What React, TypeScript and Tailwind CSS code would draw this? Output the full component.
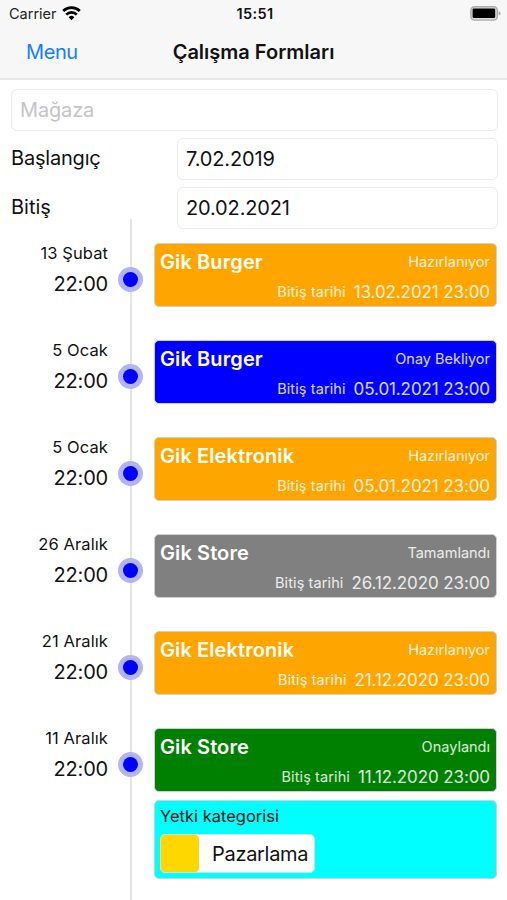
import React, { useState } from 'react';

interface WorkForm {
  id: string;
  store: string;
  day: string;
  time: string;
  status: string;
  endDate: string;
  category?: string;
}

const forms: WorkForm[] = [
  { id: '1', store: 'Gik Burger', day: '13 Şubat', time: '22:00', status: 'Hazırlanıyor', endDate: '13.02.2021 23:00' },
  { id: '2', store: 'Gik Burger', day: '5 Ocak', time: '22:00', status: 'Onay Bekliyor', endDate: '05.01.2021 23:00' },
  { id: '3', store: 'Gik Elektronik', day: '5 Ocak', time: '22:00', status: 'Hazırlanıyor', endDate: '05.01.2021 23:00' },
  { id: '4', store: 'Gik Store', day: '26 Aralık', time: '22:00', status: 'Tamamlandı', endDate: '26.12.2020 23:00' },
  { id: '5', store: 'Gik Elektronik', day: '21 Aralık', time: '22:00', status: 'Hazırlanıyor', endDate: '21.12.2020 23:00' },
  { id: '6', store: 'Gik Store', day: '11 Aralık', time: '22:00', status: 'Onaylandı', endDate: '11.12.2020 23:00', category: 'Pazarlama' },
];

const statusColors: Record<string, string> = {
  'Hazırlanıyor': 'bg-[#ffa500]',
  'Onay Bekliyor': 'bg-[#0000ff]',
  'Tamamlandı': 'bg-[#808080]',
  'Onaylandı': 'bg-[#008000]',
};

const inputClass =
  'h-[42px] min-w-0 rounded-md border border-[#ebebeb] bg-white px-[8px] text-[20px] tracking-[-0.15px] outline-none placeholder:text-[#c4c4c6]';

function StatusBar() {
  return (
    <div className="flex h-[27px] items-center justify-between px-[8px]">
      <div className="flex flex-1 items-center gap-[5px] pl-[1px]">
        <span className="text-[14.5px] text-[#222]">Carrier</span>
        <svg width="19" height="15" viewBox="0 0 19 15" fill="none" stroke="#000" strokeWidth="2.7">
          <path d="M1.2 5a12 12 0 0 1 16.6 0" />
          <path d="M4.2 8.6a7.6 7.6 0 0 1 10.6 0" />
          <path d="M9.5 14.2 6.6 11.2a4.2 4.2 0 0 1 5.8 0z" fill="#000" stroke="none" />
        </svg>
      </div>
      <span className="text-[14.5px] font-semibold tracking-[0.4px]">15:51</span>
      <div className="-mr-[2px] flex flex-1 justify-end">
        <svg width="31" height="15" viewBox="0 0 31 15">
          <rect x="0.9" y="0.7" width="26.4" height="13.4" rx="3.6" fill="#dcdcdc" stroke="#ababab" strokeWidth="1.4" />
          <rect x="2.6" y="2.6" width="22.6" height="9.4" rx="1.2" fill="#000" />
          <path d="M28.6 5.2q2 .6 2 2.2t-2 2.2z" fill="#a9a9a9" />
        </svg>
      </div>
    </div>
  );
}

function FormCard({ form }: { form: WorkForm }) {
  return (
    <div
      className={`flex h-[64px] flex-col justify-between rounded-[5px] border border-[#d0d0d0] pt-[5px] pr-[6px] pb-[1px] pl-[5px] text-white ${statusColors[form.status]}`}
    >
      <div className="flex items-center justify-between">
        <span className="text-[20px] leading-[26px] font-semibold tracking-[0.1px]">{form.store}</span>
        <span className="text-[14.5px] leading-[24px] text-white/85">{form.status}</span>
      </div>
      <div className="flex items-center justify-end gap-[8px] text-white/85">
        <span className="text-[14.5px] tracking-[0.1px]">Bitiş tarihi</span>
        <span className="text-[17px] leading-[26px] tracking-[-0.1px]">{form.endDate}</span>
      </div>
    </div>
  );
}

function CategoryCard({ category }: { category: string }) {
  return (
    <div className="mt-[8px] flex h-[79px] flex-col items-start rounded-[5px] border border-[#d0d0d0] bg-[#00ffff] px-[5px] pt-[4px]">
      <span className="text-[16.5px] leading-[23px]">Yetki kategorisi</span>
      <div className="mt-[6px] flex h-[39px] items-center rounded-[5px] border border-[#dcdcdc] bg-white pr-[6px]">
        <span className="h-[37px] w-[38px] rounded-[4px] bg-[#ffd700]" />
        <span className="pl-[13px] text-[20px] tracking-[-0.3px]">{category}</span>
      </div>
    </div>
  );
}

function TimelineRow({ form }: { form: WorkForm }) {
  return (
    <div className={`flex ${form.category ? 'flex-1' : 'h-[97px] shrink-0'}`}>
      <div className="w-[108px] pt-[22px] text-right">
        <div className="text-[16.5px] leading-[25px] tracking-[0.1px]">{form.day}</div>
        <div className="mt-[4px] text-[20px] leading-[28px] tracking-[-0.2px]">{form.time}</div>
      </div>
      <div className="relative ml-[10px] w-[25px]">
        <div className="ml-[12px] h-full w-[2px] bg-[#e4e4e4]" />
        <div className="absolute top-[48px] left-0 flex size-[25px] items-center justify-center rounded-full bg-[#b3b3f8]">
          <div className="size-[15px] rounded-full bg-[#0000ff]" />
        </div>
      </div>
      <div className="ml-[11px] w-[343px] pt-[24px]">
        <FormCard form={form} />
        {form.category && <CategoryCard category={form.category} />}
      </div>
    </div>
  );
}

export default function App() {
  const [store, setStore] = useState('');
  const [startDate, setStartDate] = useState('7.02.2019');
  const [endDate, setEndDate] = useState('20.02.2021');

  return (
    <div className="flex h-[900px] w-[507px] flex-col overflow-hidden bg-white font-['Inter',sans-serif] text-[#111]">
      <header className="h-[80px] border-b-2 border-[#e8e8e8] bg-[#f7f7f7]">
        <StatusBar />
        <div className="flex h-[50px] items-center px-[26px]">
          <div className="flex-1">
            <button className="text-[20px] tracking-[-0.4px] text-[#157efb]">Menu</button>
          </div>
          <h1 className="text-[20px] font-semibold">Çalışma Formları</h1>
          <div className="flex-1" />
        </div>
      </header>

      <div className="flex flex-col gap-[7px] pt-[9px] pr-[9px] pl-[11px]">
        <input
          value={store}
          onChange={(e) => setStore(e.target.value)}
          placeholder="Mağaza"
          className={inputClass}
        />
        <div className="flex">
          <label className="w-[166px] pt-[5px] text-[20px] leading-[30px] tracking-[-0.2px]">Başlangıç</label>
          <input value={startDate} onChange={(e) => setStartDate(e.target.value)} className={`flex-1 ${inputClass}`} />
        </div>
        <div className="flex">
          <label className="w-[166px] pt-[5px] text-[20px] leading-[30px]">Bitiş</label>
          <input value={endDate} onChange={(e) => setEndDate(e.target.value)} className={`flex-1 ${inputClass}`} />
        </div>
      </div>

      <main className="-mt-[10px] flex flex-1 flex-col">
        {forms.map((form) => (
          <TimelineRow key={form.id} form={form} />
        ))}
      </main>
    </div>
  );
}
